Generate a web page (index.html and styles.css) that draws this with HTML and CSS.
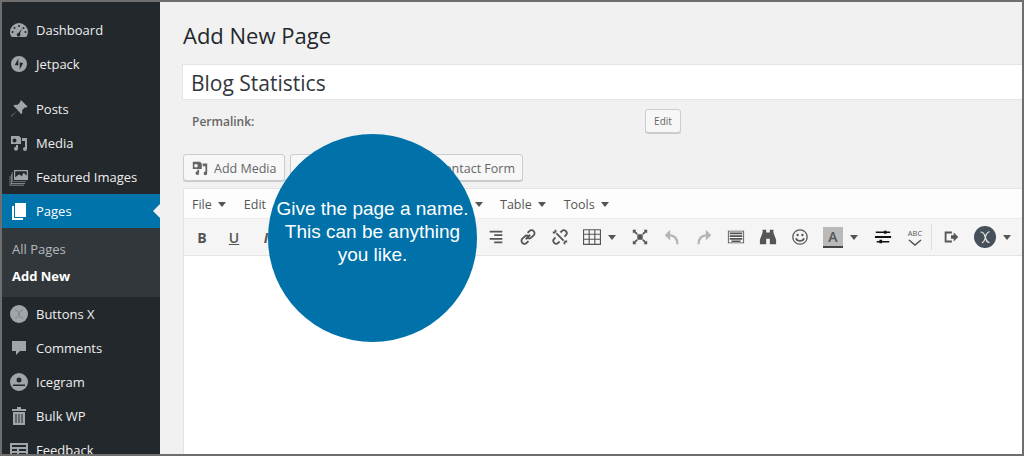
FILE: index.html
```html
<!DOCTYPE html>
<html lang="en">
<head>
<meta charset="utf-8">
<title>Add New Page</title>
<link rel="stylesheet" href="styles.css">
</head>
<body>
<div class="frame">
  <nav class="sidebar">
    <ul class="menu">
      <li class="item"><svg class="mi" viewBox="0 0 20 20"><path fill-rule="evenodd" d="M10 3a9 9 0 0 0-9 9c0 2 .7 3.700 1.800 5h14.400A9 9 0 0 0 19 12a9 9 0 0 0-9-9zM10 5a1 1 0 1 1 0 2 1 1 0 0 1 0-2zM5.500 7a1 1 0 1 1 0 2 1 1 0 0 1 0-2zM14.500 7a1 1 0 1 1 0 2 1 1 0 0 1 0-2zM3.500 11a1 1 0 1 1 0 2 1 1 0 0 1 0-2zM16.500 11a1 1 0 1 1 0 2 1 1 0 0 1 0-2zM13 8.500l-2 5a1.800 1.800 0 1 1-1.500-.6z"/></svg><span>Dashboard</span></li>
      <li class="item"><svg class="mi" viewBox="0 0 20 20"><path fill-rule="evenodd" d="M10 2a8 8 0 1 0 0 16 8 8 0 0 0 0-16zM9.300 4.500v7l-3.500-.6zM10.700 15.500v-7l3.500.6z"/></svg><span>Jetpack</span></li>
      <li class="item sep"><svg class="mi" viewBox="0 0 20 20"><path d="M12.500 1.500l6 6-1.500 1.200-1-.5-3 3c.6 1.600.3 3-.7 4L8.500 11l-5.500 6-1.200.8.800-1.200 6-5.600-4.200-4.200c1-1 2.400-1.300 4-.7l3-3-.5-1z"/></svg><span>Posts</span></li>
      <li class="item"><svg class="mi" viewBox="0 0 20 20"><path fill-rule="evenodd" d="M2 3h8l2 2v6H2zM5.500 5.500a2 2 0 1 0 0 4 2 2 0 0 0 0-4zM13 5h5v11a2 2 0 1 1-2-2V8h-3zM9 12v3.500a2 2 0 1 1-2-1.800V12z"/></svg><span>Media</span></li>
      <li class="item"><svg class="mi" viewBox="0 0 20 20"><path fill-rule="evenodd" d="M5 3h14v10H5zM6.200 4.200v6l4-3 2.500 2 2-3.500 3 3V4.200zM3.500 5H4v9.500h13v.5H3.500zM2 7h.7v9.200H16v.8H2zM.7 9h.6v8.800H15v.7H.7z"/></svg><span>Featured Images</span></li>
      <li class="item current"><svg class="mi" viewBox="0 0 20 20"><path d="M6 2h11v14H6zM3 5h2v12h9v2H3z"/></svg><span>Pages</span></li>
    </ul>
    <ul class="submenu">
      <li>All Pages</li>
      <li class="on">Add New</li>
    </ul>
    <ul class="menu">
      <li class="item"><svg class="mi" viewBox="0 0 20 20"><circle cx="10" cy="10" r="9"/><path d="M6 6c3 0 3.500 2 4 4s1.200 4 4 4M14 6c-2.500 0-3.500 2-4 4s-1.500 4-4 4" fill="none" stroke="#7f8489" stroke-width="1"/></svg><span>Buttons X</span></li>
      <li class="item"><svg class="mi" viewBox="0 0 20 20"><path d="M3 3h14v10h-6l-4 4v-4H3z"/></svg><span>Comments</span></li>
      <li class="item"><svg class="mi" viewBox="0 0 20 20"><path fill-rule="evenodd" d="M10 1a9 9 0 1 0 0 18 9 9 0 0 0 0-18zM10 5.500a2.500 2.500 0 1 1 0 5 2.500 2.500 0 0 1 0-5zM4 12.500h12v1.500H4z"/></svg><span>Icegram</span></li>
      <li class="item"><svg class="mi" viewBox="0 0 20 20"><path fill-rule="evenodd" d="M8 1h4v2h5v2H3V3h5zM4 6h12v13H4zM6.500 8v9h1V8zM9.500 8v9h1V8zM12.500 8v9h1V8z"/></svg><span>Bulk WP</span></li>
      <li class="item"><svg class="mi" viewBox="0 0 20 20"><path fill-rule="evenodd" d="M1 3h18v15H1zM3 5v2h14V5zM3 9v2h5V9zM10 9v2h7V9zM3 13v2h5v-2zM10 13v2h7v-2z"/></svg><span>Feedback</span></li>
    </ul>
  </nav>

  <main class="content">
    <h1 class="heading">Add New Page</h1>
    <div class="title-field">Blog Statistics</div>
    <div class="permalink">
      <strong>Permalink:</strong>
      <button class="btn small">Edit</button>
    </div>
    <div class="media-row">
      <button class="btn media"><svg class="bi" viewBox="0 0 20 20"><path fill-rule="evenodd" d="M2 3h8l2 2v6H2zM5.500 5.500a2 2 0 1 0 0 4 2 2 0 0 0 0-4zM13 5h5v11a2 2 0 1 1-2-2V8h-3zM9 12v3.500a2 2 0 1 1-2-1.800V12z"/></svg>Add Media</button>
      <button class="btn contact">Add Contact Form</button>
    </div>
    <section class="editor">
      <div class="menubar">
        <span class="mb first">File<i class="caret"></i></span>
        <span class="mb">Edit</span>
        <span class="mb hidden-part"><i class="caret"></i></span>
        <span class="mb">Table<i class="caret"></i></span>
        <span class="mb">Tools<i class="caret"></i></span>
      </div>
      <div class="toolbar">
        <span class="tb letter bold">B</span>
        <span class="tb letter under">U</span>
        <span class="tb letter ital">I</span>
        <span class="tb-gap"></span>
        <span class="tb"><svg class="ti" viewBox="0 0 20 20"><path d="M3 3h14v2H3zM8 7h9v2H8zM3 11h14v2H3zM8 15h9v2H8z"/></svg></span>
        <span class="tb"><svg class="ti line" viewBox="0 0 20 20" stroke-width="2"><path d="M7.500 12.500l5-5M9.500 5.500l2-2a3.200 3.200 0 0 1 4.800 0 3.200 3.200 0 0 1 0 4.600l-2.500 2.400a3.200 3.200 0 0 1-4.500 0M10.500 14.500l-2 2a3.200 3.200 0 0 1-4.800 0 3.200 3.200 0 0 1 0-4.600l2.500-2.400a3.200 3.200 0 0 1 4.500 0"/></svg></span>
        <span class="tb"><svg class="ti line" viewBox="0 0 20 20" stroke-width="2"><path d="M10.500 5l1.500-1.500a3.200 3.200 0 0 1 4.500 0 3.200 3.200 0 0 1 0 4.500L15 9.500M9.500 15L8 16.500a3.200 3.200 0 0 1-4.500 0 3.200 3.200 0 0 1 0-4.500L5 10.500M6 6l8 8M5 2v3M2 5h3M15 18v-3M18 15h-3"/></svg></span>
        <span class="tb with-caret"><svg class="ti line" viewBox="0 0 16 16" stroke-width="1"><path d="M.5 1.500h15v13H.5zM.5 5.500h15M.5 10h15M5.500 1.500v13M10.500 1.500v13"/></svg><i class="caret"></i></span>
        <span class="tb"><svg class="ti" viewBox="0 0 20 20"><path d="M7 7h6v6H7zM2 2h4L4.700 3.300 7.500 6 6 7.500 3.300 4.700 2 6zM18 2v4l-1.300-1.300L14 7.500 12.500 6l2.800-2.700L14 2zM2 18v-4l1.300 1.300L6 12.500 7.500 14l-2.800 2.700L6 18zM18 18h-4l1.300-1.300-2.800-2.700 1.500-1.500 2.700 2.800L18 14z"/></svg></span>
        <span class="tb mute"><svg class="ti line" viewBox="0 0 20 20" stroke-width="2.500"><path d="M16 18c0-7-3-10-10-10"/><path class="solid" d="M8 2v12L2 8z"/></svg></span>
        <span class="tb mute"><svg class="ti line" viewBox="0 0 20 20" stroke-width="2.500"><path d="M4 18c0-7 3-10 10-10"/><path class="solid" d="M12 2v12l6-6z"/></svg></span>
        <span class="tb"><svg class="ti" viewBox="0 0 20 20"><path fill-rule="evenodd" d="M1 3h18v14H1zM2 4v12h16V4zM3 5h14v2H3zM3 8h14v2H3zM3 11h14v2H3zM5 14h10v1.500H5z"/></svg></span>
        <span class="tb"><svg class="ti" viewBox="0 0 20 20"><path d="M4 2h4v3h4V2h4v3l3 8v5h-7v-6H8v6H1v-5l3-8zM8.500 7h3v3h-3z"/></svg></span>
        <span class="tb"><svg class="ti line" viewBox="0 0 20 20" stroke-width="1.400"><circle cx="10" cy="10" r="8"/><circle cx="7.300" cy="7.800" r=".6"/><circle cx="12.700" cy="7.800" r=".6"/><path stroke-width="1.800" d="M5.500 11.500c1.200 4 7.800 4 9 0"/></svg></span>
        <span class="tb with-caret wide"><span class="color-a">A</span><i class="caret"></i></span>
        <span class="tb dark"><svg class="ti" viewBox="0 0 20 20"><path d="M2 4h16v1.500H2zM1 9h18v2H1zM3 14.500h14V16H3zM11 3h3v3.500h-3zM6 13h3v4H6z"/></svg></span>
        <span class="tb spell"><span class="abc">ABC</span><svg class="check" viewBox="0 0 14 7"><path d="M1 1l6 5 6-5"/></svg></span>
        <span class="tb-sep"></span>
        <span class="tb"><svg class="ti" viewBox="0 0 20 20"><path d="M3 4h8v2H5v8h6v2H3zM10 8h3V5l5 5-5 5v-3h-3z"/></svg></span>
        <span class="tb with-caret"><svg class="xi" viewBox="0 0 22 22"><circle cx="11" cy="11" r="11" fill="#46505a"/><path d="M6.500 6c4 0 4 3 5 6s1.500 4.500 4 4.500M15.500 5.500c-2.500 1-3.500 3-4 5.500-.5 2.500-1.500 5-3.500 6" fill="none" stroke="#e8e8e8" stroke-width="1.200"/></svg><i class="caret"></i></span>
      </div>
      <div class="canvas"></div>
    </section>
  </main>

  <div class="callout">Give the page a name. This can be anything you like.</div>
</div>
</body>
</html>
```

FILE: styles.css
```css
* { box-sizing: border-box; }
html, body { margin: 0; height: 100%; }
body { overflow: hidden; background: #f1f1f1; font-family: "Open Sans", "Noto Sans", sans-serif; }
ul { list-style: none; margin: 0; padding: 0; }

.frame {
  position: relative;
  display: flex;
  width: 1024px;
  height: 456px;
  border: 2px solid #6e6e6e;
  overflow: hidden;
}

.sidebar {
  flex: 0 0 158px;
  height: 452px;
  padding-top: 11px;
  background: #23282d;
  color: #eeeeee;
  font-size: 13px;
  overflow: hidden;
}
.item {
  position: relative;
  display: flex;
  align-items: center;
  height: 34px;
  flex-shrink: 0;
}
.item span { margin-left: 7px; }
.item.sep { margin-top: 11px; }
.mi { width: 20px; height: 20px; margin-left: 7px; fill: #a0a5aa; flex: none; }
.current { background: #0073aa; color: #fff; }
.current .mi { fill: #fff; }
.current::after {
  content: "";
  position: absolute;
  right: 0;
  top: 10px;
  border: 7px solid transparent;
  border-right: 7px solid #f1f1f1;
  border-left: 0;
}
.submenu {
  height: 69px;
  padding-top: 8px;
  background: #32373c;
  font-size: 13px;
  color: #b4b9be;
}
.submenu li { height: 27px; line-height: 27px; padding-left: 10px; }
.submenu .on { color: #fff; font-weight: 700; }

.content {
  flex: 1;
  min-width: 0;
  padding: 0 0 0 22px;
}
.heading {
  margin: 17px 0 0 1px;
  height: 33px;
  font-size: 22px;
  line-height: 33px;
  font-weight: 400;
  color: #23282d;
}
.title-field {
  height: 36px;
  margin-top: 12px;
  padding-left: 8px;
  background: #fff;
  border: 1px solid #e4e4e4;
  border-right: 0;
  font-size: 21px;
  line-height: 36px;
  color: #32373c;
}
.permalink {
  display: flex;
  align-items: center;
  height: 24px;
  margin-top: 9px;
  padding-left: 10px;
  font-size: 12px;
  color: #666;
}
.permalink strong { width: 453px; font-weight: 600; }
.btn {
  display: inline-flex;
  align-items: center;
  padding: 0;
  background: #f7f7f7;
  border: 1px solid #cccccc;
  border-radius: 3px;
  box-shadow: 0 1px 0 #cccccc;
  font-family: inherit;
  color: #666;
}
.btn.small { width: 36px; height: 24px; justify-content: center; font-size: 10px; }
.media-row { display: flex; gap: 5px; margin-top: 21px; padding-left: 1px; }
.media-row .btn { height: 27px; padding-top: 1px; font-size: 12.500px; }
.btn.media { width: 102px; padding-left: 7px; }
.bi { width: 18px; height: 18px; margin-right: 5px; fill: #666; }
.btn.contact { width: 233px; justify-content: flex-end; padding-right: 7px; }

.editor {
  margin: 7px 0 0 1px;
  height: 268px;
  background: #fff;
  border: 1px solid #e4e4e4;
  border-right: 0;
}
.menubar {
  display: flex;
  align-items: center;
  height: 29px;
  padding-top: 1px;
  font-size: 12.500px;
  color: #555;
  background: #fdfdfd;
}
.mb { display: inline-flex; align-items: center; margin-right: 18px; }
.mb.first { margin-left: 8px; }
.mb.hidden-part { margin-left: 185px; margin-right: 17px; }
.caret {
  display: inline-block;
  margin-left: 6px;
  border-top: 5px solid #555;
  border-left: 4px solid transparent;
  border-right: 4px solid transparent;
}
.toolbar {
  display: flex;
  align-items: center;
  height: 38px;
  padding-left: 2px;
  background: #f5f5f5;
  border-top: 1px solid #ececec;
  border-bottom: 1px solid #e4e4e4;
  color: #555;
}
.tb {
  display: flex;
  align-items: center;
  justify-content: center;
  flex: 0 0 32px;
  height: 28px;
}
.tb-gap { flex: 0 0 198px; }
.tb-sep { flex: 0 0 1px; height: 26px; background: #dcdcdc; margin: 0 3px 0 0; }
.letter { font-size: 14px; }
.bold { font-weight: 700; }
.under { text-decoration: underline; font-weight: 600; }
.ital { font-style: italic; font-weight: 700; }
.ti { width: 18px; height: 18px; fill: currentColor; }
.ti.line { fill: none; stroke: currentColor; }
.ti .solid { fill: currentColor; stroke: none; }
.mute { color: #b5b5b5; }
.dark { color: #111; }
.with-caret { flex-basis: 48px; justify-content: flex-start; padding-left: 7px; }
.with-caret .caret { margin-left: 7px; }
.with-caret.wide { flex-basis: 51px; }
.color-a {
  display: block;
  width: 20px;
  height: 21px;
  background: #b9b9b9;
  border-bottom: 2px solid #444;
  font-size: 14px;
  font-weight: 600;
  line-height: 19px;
  text-align: center;
}
.spell { flex-direction: column; }
.abc { font-size: 7.500px; line-height: 9px; }
.check { width: 14px; height: 7px; margin-top: 1px; fill: none; stroke: currentColor; stroke-width: 1.600; }
.xi { width: 22px; height: 22px; flex: none; }
.canvas { height: 200px; background: #fff; }

.callout {
  position: absolute;
  left: 266px;
  top: 132px;
  display: flex;
  align-items: center;
  justify-content: center;
  width: 209px;
  height: 208px;
  padding: 0 4px 14px;
  border-radius: 50%;
  background: #0071a9;
  color: #fff;
  font-family: "Liberation Sans", Arial, sans-serif;
  font-size: 19px;
  line-height: 23px;
  text-align: center;
}
```
